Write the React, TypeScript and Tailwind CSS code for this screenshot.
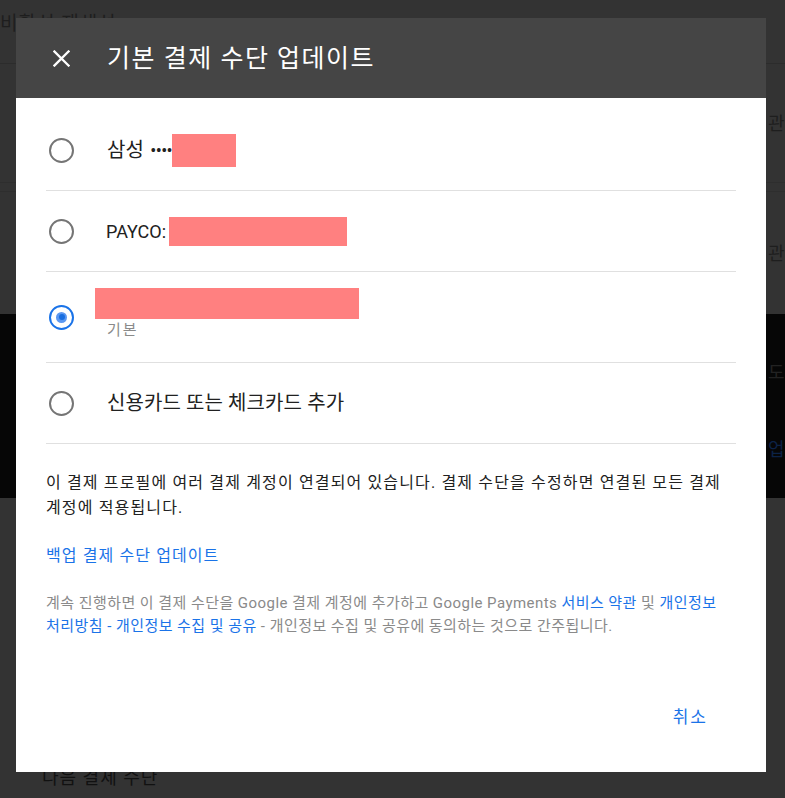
import React from "react";

const font = "font-[Roboto,'Noto_Sans_CJK_KR',sans-serif]";

const Radio = ({ checked = false }: { checked?: boolean }) =>
  checked ? (
    <div className="ml-[3px] w-[25px] h-[25px] rounded-full border-[2.5px] border-[#1a73e8] flex items-center justify-center shrink-0">
      <div className="w-[11px] h-[11px] rounded-full bg-[#5b98f2] flex items-center justify-center">
        <div className="w-[6px] h-[6px] rounded-full bg-[#1a6ee0]" />
      </div>
    </div>
  ) : (
    <div className="ml-[3px] w-[25px] h-[25px] rounded-full border-[2.5px] border-[#757575] shrink-0" />
  );

const App = () => {
  return (
    <div className={`${font} relative w-[785px] h-[798px] overflow-hidden bg-[#333333]`}>
      {/* dimmed page behind the dialog */}
      <div className="h-[64px] border-b border-[#2c2c2c]">
        <p className="pt-[10px] text-[19px] text-[#1e1e1e] tracking-[1px]">비활성 재생성</p>
      </div>
      <div className="h-[118px] flex items-center justify-end">
        <span className="w-[17px] text-[18px] text-[#1e1e1e] overflow-hidden whitespace-nowrap">관리</span>
      </div>
      <div className="h-[10px] border-y border-[#2e2e2e]" />
      <div className="h-[122px] flex items-center justify-end">
        <span className="w-[17px] text-[18px] text-[#1e1e1e] overflow-hidden whitespace-nowrap">관리</span>
      </div>
      <div className="h-[184px] bg-[#060606] flex flex-col items-end justify-center gap-[50px] pt-[10px]">
        <span className="w-[17px] text-[18px] text-[#222] overflow-hidden whitespace-nowrap">도움말</span>
        <span className="w-[17px] text-[18px] text-[#0c2246] overflow-hidden whitespace-nowrap">업데이트</span>
      </div>
      <div className="h-[266px]" />
      <p className="pl-[42px] text-[18px] text-[#111] tracking-[1px]">다음 결제 수단</p>

      {/* dialog */}
      <div className="absolute left-[16px] top-[18px] w-[750px] h-[754px] bg-white flex flex-col">
        <div className="h-[80px] bg-[#454545] flex items-center shrink-0">
          <div className="ml-[31px] w-[28px] h-[28px] flex items-center justify-center">
            <svg width="17" height="17" viewBox="0 0 17 17">
              <path d="M1.5 1.5 L15.5 15.5 M15.5 1.5 L1.5 15.5" stroke="#fff" strokeWidth="2.3" strokeLinecap="square" />
            </svg>
          </div>
          <h1 className="ml-[32px] text-[25px] leading-none text-white tracking-[1.5px]">기본 결제 수단 업데이트</h1>
        </div>

        <div className="px-[30px] pt-[12px] flex-1 flex flex-col break-keep">
          <div className="h-[81px] flex items-center border-b border-[#e0e0e0]">
            <Radio />
            <div className="ml-[33px] flex items-center text-[18px] text-[#212121]">
              <span className="text-[20px] tracking-[0.2px]">삼성</span>
              <span className="ml-[6px] tracking-[-0.6px]">••••</span>
              <span className="w-[64px] h-[33px] bg-[#ff8080]" />
            </div>
          </div>

          <div className="h-[81px] flex items-center border-b border-[#e0e0e0]">
            <Radio />
            <div className="ml-[32px] flex items-center text-[18px] text-[#212121]">
              <span>PAYCO:</span>
              <span className="ml-[3px] w-[178px] h-[29px] bg-[#ff8080]" />
            </div>
          </div>

          <div className="h-[91px] flex items-center border-b border-[#e0e0e0]">
            <Radio checked />
            <div className="ml-[33px] flex flex-col pb-[8px]">
              <span className="-ml-[12px] w-[264px] h-[31px] bg-[#ff8080]" />
              <span className="mt-[2px] text-[15px] leading-[18px] text-[#8a8a8a] tracking-[2px]">기본</span>
            </div>
          </div>

          <div className="h-[81px] flex items-center border-b border-[#e0e0e0]">
            <Radio />
            <span className="ml-[33px] text-[20px] text-[#212121] tracking-[0.1px]">신용카드 또는 체크카드 추가</span>
          </div>

          <p className="mt-[26px] text-[16px] leading-[25px] text-[#212121] tracking-[1.15px]">
            이 결제 프로필에 여러 결제 계정이 연결되어 있습니다. 결제 수단을 수정하면 연결된 모든 결제
            계정에 적용됩니다.
          </p>

          <a className="mt-[23px] text-[16px] leading-[25px] text-[#1a73e8] tracking-[1.1px] cursor-pointer">
            백업 결제 수단 업데이트
          </a>

          <p className="mt-[24px] text-[15px] leading-[23px] text-[#8a8a8a] tracking-[0.45px]">
            계속 진행하면 이 결제 수단을 Google 결제 계정에 추가하고 Google Payments{" "}
            <a className="text-[#1a73e8]">서비스 약관</a> 및{" "}
            <a className="text-[#1a73e8]">개인정보 처리방침 - 개인정보 수집 및 공유</a> - 개인정보 수집 및 공유에
            동의하는 것으로 간주됩니다.
          </p>

          <div className="mt-auto pb-[36px] flex justify-end pr-[12px]">
            <button className="px-4 h-[36px] text-[17px] text-[#1a73e8] tracking-[2px]">취소</button>
          </div>
        </div>
      </div>
    </div>
  );
};

export default App;
